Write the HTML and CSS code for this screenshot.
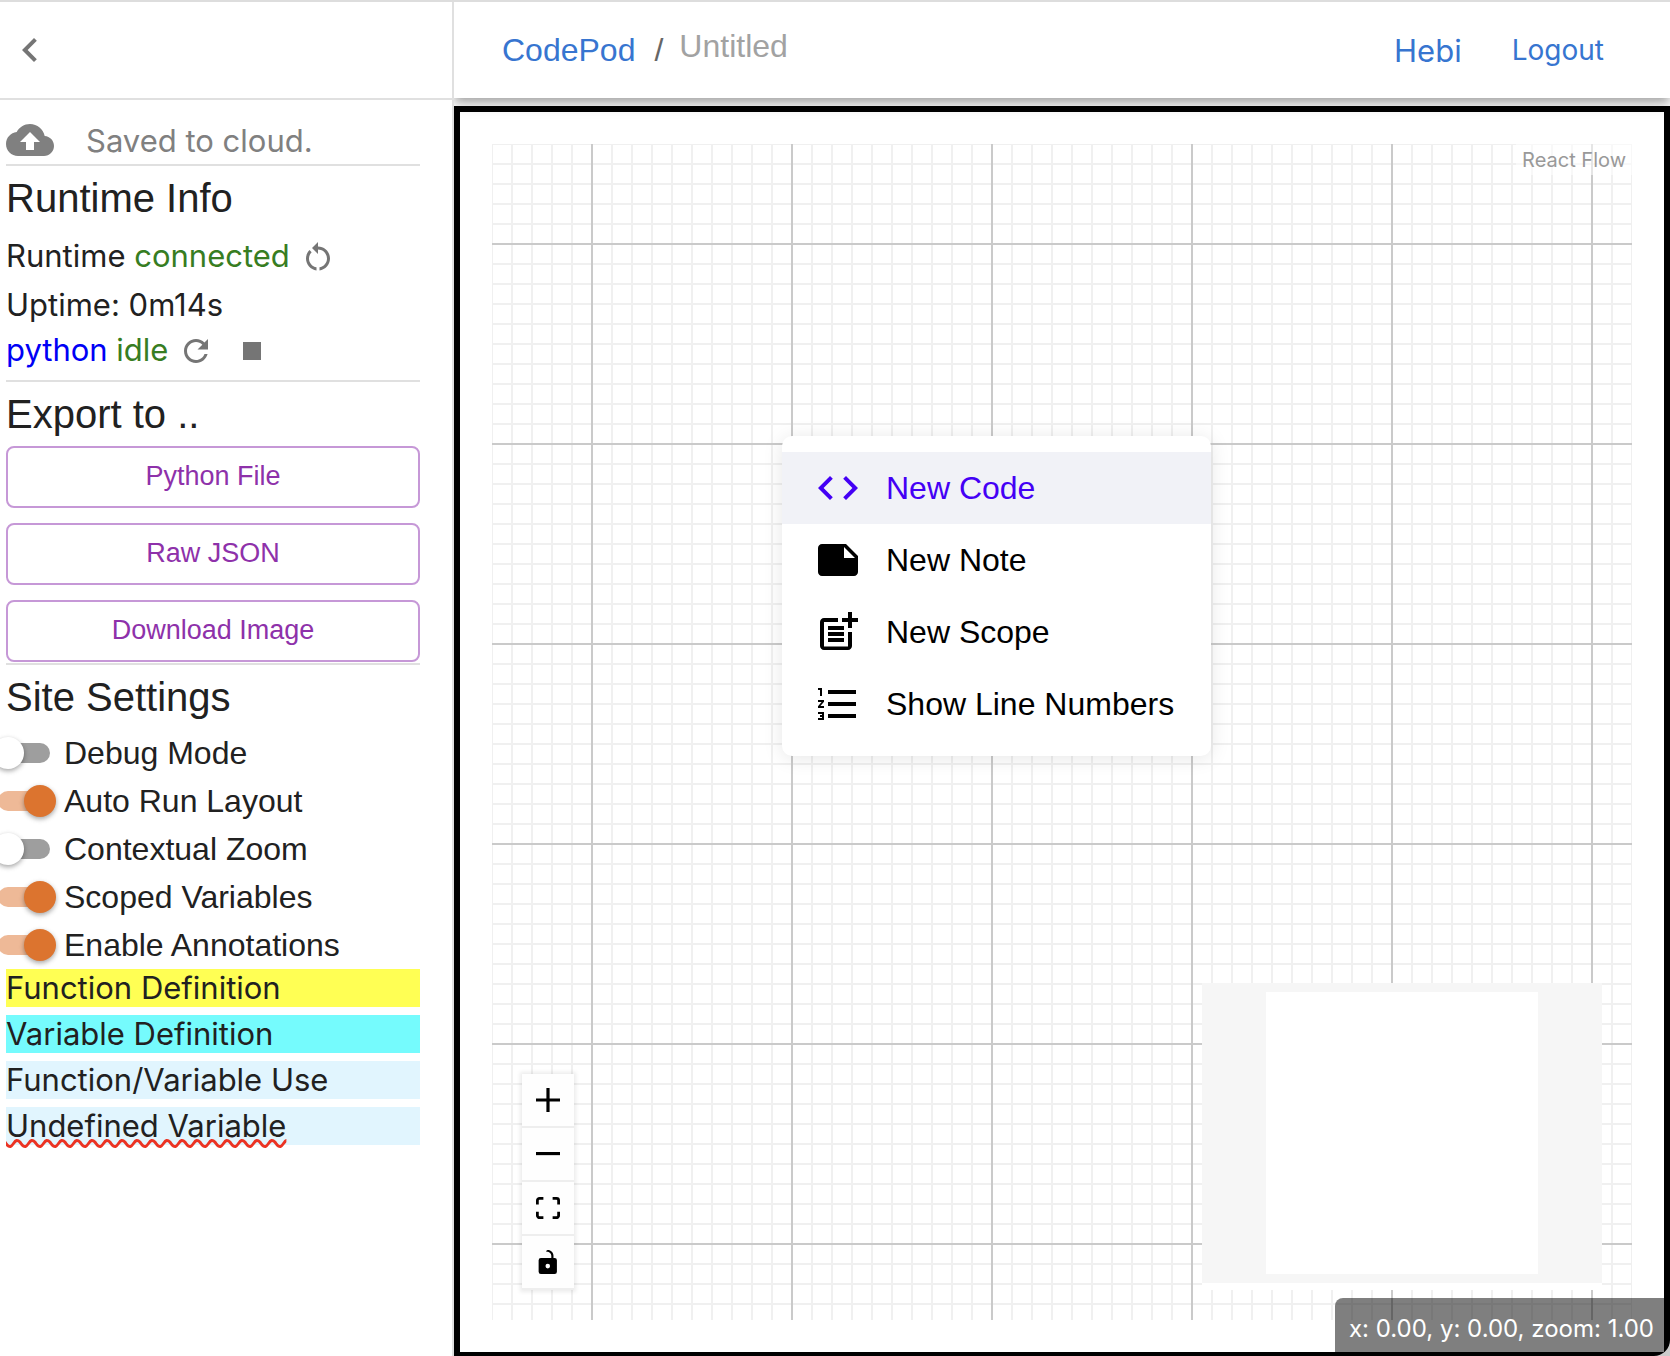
FILE: index.html
```html
<!DOCTYPE html>
<html lang="en">
<head>
<meta charset="utf-8">
<meta name="viewport" content="width=device-width, initial-scale=1">
<title>CodePod</title>
<link rel="stylesheet" href="styles.css">
</head>
<body>
<div class="app">
  <aside class="sidebar">
    <div class="sidebar-head">
      <button class="icon-btn" aria-label="Collapse sidebar"><svg class="icon-48" viewBox="0 0 24 24"><path d="M15.41 7.41 14 6l-6 6 6 6 1.41-1.41L10.83 12z"/></svg></button>
    </div>
    <div class="sidebar-body">
      <div class="sync">
        <svg class="icon-48" viewBox="0 0 24 24"><path d="M19.35 10.04C18.67 6.59 15.64 4 12 4 9.11 4 6.6 5.64 5.35 8.04 2.34 8.36 0 10.91 0 14c0 3.31 2.69 6 6 6h13c2.76 0 5-2.24 5-5 0-2.64-2.05-4.78-4.65-4.96zM14 13v4h-4v-4H7l5-5 5 5h-3z"/></svg>
        <span>Saved to cloud.</span>
      </div>
      <section class="section">
        <h2>Runtime Info</h2>
        <div class="runtime-row">
          <span>Runtime <span class="ok">connected</span></span>
          <button class="icon-btn inline" aria-label="Restart runtime"><svg class="icon-36" viewBox="0 0 24 24"><path d="M12 5V2L8 6l4 4V7c3.31 0 6 2.69 6 6 0 2.97-2.17 5.43-5 5.91v2.02c3.95-.49 7-3.85 7-7.93 0-4.42-3.58-8-8-8zm-6 8c0-1.65.67-3.15 1.76-4.24L6.34 7.34C4.9 8.79 4 10.79 4 13c0 4.08 3.05 7.44 7 7.93v-2.02c-2.83-.48-5-2.94-5-5.91z"/></svg></button>
        </div>
        <div class="uptime">Uptime: 0m14s</div>
        <div class="kernel-row">
          <span><span class="lang">python</span> <span class="ok">idle</span></span>
          <div class="kernel-actions">
            <button class="icon-btn inline" aria-label="Refresh"><svg class="icon-36" viewBox="0 0 24 24"><path d="M17.65 6.35C16.2 4.9 14.21 4 12 4c-4.42 0-7.99 3.58-7.99 8s3.57 8 7.99 8c3.73 0 6.84-2.55 7.73-6h-2.08c-.82 2.33-3.04 4-5.65 4-3.31 0-6-2.69-6-6s2.69-6 6-6c1.66 0 3.14.69 4.22 1.78L13 11h7V4l-2.35 2.35z"/></svg></button>
            <button class="icon-btn inline" aria-label="Stop"><svg class="icon-36" viewBox="0 0 24 24"><path d="M6 6h12v12H6z"/></svg></button>
          </div>
        </div>
      </section>
      <section class="section">
        <h2>Export to ..</h2>
        <div class="exports">
          <button class="outlined">Python File</button>
          <button class="outlined">Raw JSON</button>
          <button class="outlined">Download Image</button>
        </div>
      </section>
      <section class="section">
        <h2>Site Settings</h2>
        <label class="setting"><input type="checkbox" class="switch"><span>Debug Mode</span></label>
        <label class="setting"><input type="checkbox" class="switch" checked><span>Auto Run Layout</span></label>
        <label class="setting"><input type="checkbox" class="switch"><span>Contextual Zoom</span></label>
        <label class="setting"><input type="checkbox" class="switch" checked><span>Scoped Variables</span></label>
        <label class="setting"><input type="checkbox" class="switch" checked><span>Enable Annotations</span></label>
        <div class="legend">
          <div class="legend-item function-def">Function Definition</div>
          <div class="legend-item variable-def">Variable Definition</div>
          <div class="legend-item usage">Function/Variable Use</div>
          <div class="legend-item usage"><span class="undefined">Undefined Variable</span></div>
        </div>
      </section>
    </div>
  </aside>
  <div class="main">
    <header class="topbar">
      <nav class="crumbs">
        <a href="#">CodePod</a>
        <span class="slash">/</span>
        <input class="title" type="text" placeholder="Untitled" aria-label="Title">
      </nav>
      <nav class="account">
        <a class="user" href="#">Hebi</a>
        <a class="logout" href="#">Logout</a>
      </nav>
    </header>
    <main class="canvas">
      <div class="flow">
        <svg class="grid" aria-hidden="true">
          <defs>
            <pattern id="minor" width="20" height="20" patternUnits="userSpaceOnUse"><path d="M0 0H20M0 20H20M0 0V20M20 0V20" stroke="#f0f0f0" stroke-width="2"/></pattern>
            <pattern id="major" x="100" y="100" width="200" height="200" patternUnits="userSpaceOnUse"><path d="M0 0H200M0 200H200M0 0V200M200 0V200" stroke="#cacaca" stroke-width="2"/></pattern>
          </defs>
          <rect width="100%" height="100%" fill="url(#minor)"/>
          <rect width="100%" height="100%" fill="url(#major)"/>
        </svg>
        <a class="attribution" href="#">React Flow</a>
        <div class="controls">
          <button aria-label="Zoom in"><svg viewBox="0 0 32 32"><path d="M32 18.133H18.133V32h-4.266V18.133H0v-4.266h13.867V0h4.266v13.867H32z"/></svg></button>
          <button aria-label="Zoom out"><svg viewBox="0 0 32 5"><path d="M0 0h32v4.2H0z"/></svg></button>
          <button aria-label="Fit view"><svg viewBox="0 0 32 30"><path d="M3.692 4.63c0-.53.4-.938.939-.938h5.215V0H4.708C2.13 0 0 2.054 0 4.63v5.216h3.692V4.631zM27.354 0h-5.2v3.692h5.17c.53 0 .984.4.984.939v5.215H32V4.631A4.624 4.624 0 0027.354 0zm.954 24.83c0 .532-.4.94-.939.94h-5.215v3.768h5.215c2.577 0 4.631-2.13 4.631-4.707v-5.139h-3.692v5.139zm-23.677.94c-.531 0-.939-.4-.939-.94v-5.138H0v5.139c0 2.577 2.13 4.707 4.708 4.707h5.138V25.77H4.631z"/></svg></button>
          <button aria-label="Toggle interactivity"><svg viewBox="0 0 25 32"><path d="M21.333 10.667H19.81V7.619C19.81 3.429 16.38 0 12.19 0c-4.114 1.828-1.37 2.133.305 2.438 1.676.305 4.42 2.59 4.42 5.181v3.048H3.047A3.056 3.056 0 000 13.714v15.238A3.056 3.056 0 003.048 32h18.285a3.056 3.056 0 003.048-3.048V13.714a3.056 3.056 0 00-3.048-3.047zM12.19 24.533a3.056 3.056 0 01-3.047-3.047 3.056 3.056 0 013.047-3.048 3.056 3.056 0 013.048 3.048 3.056 3.056 0 01-3.048 3.047z"/></svg></button>
        </div>
        <div class="minimap"><div class="minimap-map"><div class="viewport"></div></div></div>
        <div class="menu" role="menu">
          <button class="menu-item active" role="menuitem"><svg class="icon-48" viewBox="0 0 24 24"><path d="M9.4 16.6 4.8 12l4.6-4.6L8 6l-6 6 6 6 1.4-1.4zm5.2 0 4.6-4.6-4.6-4.6L16 6l6 6-6 6-1.4-1.4z"/></svg>New Code</button>
          <button class="menu-item" role="menuitem"><svg class="icon-48" viewBox="0 0 24 24"><path d="m22 10-6-6H4c-1.1 0-2 .9-2 2v12.01c0 1.1.9 1.99 2 1.99l16-.01c1.1 0 2-.89 2-2v-8zm-7-4.5 5.5 5.5H15V5.5z"/></svg>New Note</button>
          <button class="menu-item" role="menuitem"><svg class="icon-48" viewBox="0 0 24 24"><path d="M17 19.22H5V7h7V5H5c-1.1 0-2 .9-2 2v12c0 1.1.9 2 2 2h12c1.1 0 2-.9 2-2v-7h-2v7.22z"/><path d="M19 2h-2v3h-3v2h3v3h2V7h3V5h-3V2zM7 9h8v2H7zM7 12v2h8v-2H7zM7 15h8v2H7z"/></svg>New Scope</button>
          <button class="menu-item" role="menuitem"><svg class="icon-48" viewBox="0 0 24 24"><path d="M2 17h2v.5H3v1h1v.5H2v1h3v-4H2v1zm1-9h1V4H2v1h1v3zm-1 3h1.8L2 13.1v.9h3v-1H3.2L5 10.9V10H2v1zm5-6v2h14V5H7zm0 14h14v-2H7v2zm0-6h14v-2H7v2z"/></svg>Show Line Numbers</button>
        </div>
      </div>
      <div class="status">x: 0.00, y: 0.00, zoom: 1.00</div>
    </main>
  </div>
</div>
</body>
</html>
```

FILE: styles.css
```css
* {
  box-sizing: border-box;
}

body {
  margin: 0;
  background: #ccc;
  color: #212121;
  font-family: "Liberation Sans", Arial, sans-serif;
  font-size: 32px;
}

button,
input {
  margin: 0;
  padding: 0;
  border: 0;
  background: none;
  color: inherit;
  font: inherit;
}

a {
  color: #3775d0;
  text-decoration: none;
}

svg {
  display: block;
  fill: currentColor;
}

.app {
  display: grid;
  grid-template-columns: 454px 1fr;
  min-height: 100vh;
  overflow: hidden;
  border-top: 2px solid #ddd;
  border-bottom-right-radius: 16px;
  background: #fff;
}

.icon-btn {
  flex: none;
  color: #757575;
}

.icon-btn.inline {
  padding-top: 4px;
}

.icon-48 {
  flex: none;
  width: 48px;
  height: 48px;
}

.icon-36 {
  width: 36px;
  height: 36px;
}

/* Sidebar */

.sidebar {
  position: relative;
  z-index: 2;
  overflow-x: hidden;
  border-right: 2px solid #e0e0e0;
  background: #fff;
}

.sidebar-head {
  display: flex;
  align-items: center;
  height: 98px;
  padding: 0 6px;
  border-bottom: 2px solid #e0e0e0;
}

.sidebar-body {
  padding: 16px 32px 32px 6px;
  font-family: Inter, sans-serif;
  font-size: 31px;
}

.sync {
  display: flex;
  align-items: center;
  gap: 32px;
  height: 48px;
  color: #808080;
}

.section {
  border-top: 2px solid #e0e0e0;
}

.section h2 {
  margin: 0;
  font-family: "Liberation Sans", Arial, sans-serif;
  font-size: 40px;
  font-weight: 400;
  line-height: 64px;
}

.runtime-row,
.kernel-row {
  display: flex;
  align-items: center;
  gap: 10px;
}

.runtime-row {
  height: 50px;
}

.uptime {
  line-height: 50px;
}

.kernel-row {
  height: 38px;
  margin-bottom: 12px;
}

.kernel-actions {
  display: flex;
  gap: 20px;
}

.ok {
  color: #377d22;
}

.lang {
  color: #0000f5;
}

.exports {
  display: grid;
  gap: 15px;
  padding-bottom: 1px;
}

.outlined {
  height: 62px;
  padding-bottom: 2px;
  border: 2px solid #c698d7;
  border-radius: 8px;
  color: #8e31aa;
  font-family: "Liberation Sans", Arial, sans-serif;
  font-size: 27px;
}

.setting {
  display: flex;
  align-items: center;
  gap: 8px;
  height: 48px;
  margin-left: -14px;
  font-family: "Liberation Sans", Arial, sans-serif;
  font-size: 32px;
}

.switch {
  appearance: none;
  position: relative;
  display: flex;
  flex: none;
  width: 64px;
  height: 32px;
}

.switch::before {
  content: "";
  position: absolute;
  inset: 6px;
  border-radius: 10px;
  background: #9e9e9e;
}

.switch::after {
  content: "";
  position: relative;
  width: 32px;
  height: 32px;
  border-radius: 50%;
  background: #fff;
  box-shadow: 0 2px 4px rgba(0, 0, 0, 0.25), 0 2px 6px rgba(0, 0, 0, 0.12);
}

.switch:checked {
  justify-content: flex-end;
}

.switch:checked::before {
  background: #eeb997;
}

.switch:checked::after {
  background: #dc742f;
}

.legend {
  display: grid;
  gap: 8px;
}

.legend-item {
  height: 38px;
  line-height: 38px;
}

.function-def {
  background: #ffff54;
}

.variable-def {
  background: #75fbfd;
}

.usage {
  background: #e1f5fe;
}

.undefined {
  text-decoration: underline wavy #eb3323 3px;
  text-decoration-skip-ink: none;
}

/* Main column */

.main {
  display: flex;
  flex-direction: column;
  min-width: 0;
}

.topbar {
  position: relative;
  z-index: 1;
  display: flex;
  align-items: center;
  justify-content: space-between;
  height: 96px;
  margin-bottom: 8px;
  padding: 0 66px 0 48px;
  background: #fff;
  box-shadow: 0 4px 8px -2px rgba(0, 0, 0, 0.2), 0 8px 10px rgba(0, 0, 0, 0.14), 0 2px 20px rgba(0, 0, 0, 0.12);
}

.crumbs,
.account {
  display: flex;
  align-items: center;
}

.slash {
  margin: 0 16px 0 19px;
  color: #666;
}

.title {
  width: 400px;
  padding-bottom: 8px;
}

.title::placeholder {
  color: #a2a2a2;
  opacity: 1;
}

.account {
  gap: 50px;
  font-family: Inter, sans-serif;
}

.user {
  font-size: 31px;
}

.logout {
  font-size: 28px;
}

.canvas {
  position: relative;
  display: flex;
  flex: 1;
  padding: 32px;
  border: 6px solid #000;
  border-bottom-width: 4px;
}

.flow {
  position: relative;
  flex: 1;
}

.grid {
  position: absolute;
  inset: 0;
  width: 100%;
  height: 100%;
}

.attribution {
  position: absolute;
  top: 0;
  right: 0;
  padding: 5px 6px 3px;
  background: rgba(255, 255, 255, 0.5);
  color: #999;
  font-family: Inter, sans-serif;
  font-size: 20px;
  line-height: 23px;
}

.controls {
  position: absolute;
  bottom: 30px;
  left: 30px;
  box-shadow: 0 0 4px 2px rgba(0, 0, 0, 0.08);
}

.controls button {
  display: flex;
  align-items: center;
  justify-content: center;
  width: 52px;
  height: 54px;
  border-bottom: 2px solid #eee;
  background: #fefefe;
  color: #000;
}

.controls svg {
  width: 24px;
  max-height: 24px;
}

.minimap {
  position: absolute;
  right: 30px;
  bottom: 30px;
  padding-bottom: 7px;
  background: #fff;
}

.minimap-map {
  width: 400px;
  height: 300px;
  padding: 9px 64px;
  background: #f6f6f6;
}

.viewport {
  height: 100%;
  background: #fff;
}

.menu {
  position: absolute;
  top: 292px;
  left: 290px;
  min-width: 429px;
  padding: 16px 0;
  border-radius: 10px;
  background: #fff;
  box-shadow: 0 2px 20px rgba(0, 0, 0, 0.1);
}

.menu-item {
  display: flex;
  align-items: center;
  gap: 24px;
  width: 100%;
  height: 72px;
  padding: 0 32px;
  color: #000;
  white-space: nowrap;
}

.menu-item.active {
  background: #f1f2f7;
  color: #4400f5;
}

.status {
  position: absolute;
  right: 0;
  bottom: 0;
  height: 54px;
  padding: 4px 10px 0 14px;
  border-top-left-radius: 8px;
  background: rgba(0, 0, 0, 0.5);
  color: #fff;
  font-family: Inter, sans-serif;
  font-size: 24px;
  line-height: 54px;
}
```
